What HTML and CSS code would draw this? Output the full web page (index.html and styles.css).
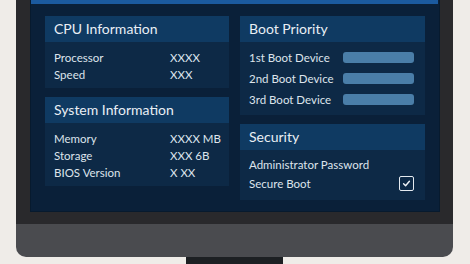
FILE: index.html
```html
<!DOCTYPE html>
<html>
<head>
<meta charset="utf-8">
<link rel="stylesheet" href="styles.css">
</head>
<body>
<div class="scene">
  <div class="monitor">
    <div class="bezel">
      <div class="screen">
        <div class="titlebar"></div>
        <div class="grid">
          <div class="col">
            <section class="panel">
              <h2 class="panel-head">CPU Information</h2>
              <div class="panel-body info">
                <div class="row"><span class="label">Processor</span><span class="value">XXXX</span></div>
                <div class="row"><span class="label">Speed</span><span class="value">XXX</span></div>
              </div>
            </section>
            <section class="panel">
              <h2 class="panel-head">System Information</h2>
              <div class="panel-body info">
                <div class="row"><span class="label">Memory</span><span class="value">XXXX MB</span></div>
                <div class="row"><span class="label">Storage</span><span class="value">XXX 6B</span></div>
                <div class="row"><span class="label">BIOS Version</span><span class="value">X XX</span></div>
              </div>
            </section>
          </div>
          <div class="col">
            <section class="panel">
              <h2 class="panel-head">Boot Priority</h2>
              <div class="panel-body boot">
                <div class="row"><span class="label">1st Boot Device</span><span class="bar"></span></div>
                <div class="row"><span class="label">2nd Boot Device</span><span class="bar"></span></div>
                <div class="row"><span class="label">3rd Boot Device</span><span class="bar"></span></div>
              </div>
            </section>
            <section class="panel">
              <h2 class="panel-head">Security</h2>
              <div class="panel-body security">
                <div class="row"><span class="label">Administrator Password</span></div>
                <div class="row"><span class="label">Secure Boot</span>
                  <span class="checkbox"><svg viewBox="0 0 15 15" width="15" height="15"><path d="M4.6 7.8 L6.6 9.8 L10.4 5.2" fill="none" stroke="#eef2f6" stroke-width="1.4" stroke-linecap="round" stroke-linejoin="round"/></svg></span>
                </div>
              </div>
            </section>
          </div>
        </div>
      </div>
    </div>
    <div class="chin"></div>
  </div>
  <div class="stand"></div>
</div>
</body>
</html>
```

FILE: styles.css
```css
* { box-sizing: border-box; }
html, body { margin: 0; padding: 0; }
body {
  background: #efece8;
  font-family: Lato, "Open Sans", sans-serif;
  color: #dde4ec;
  width: 470px;
  height: 264px;
  overflow: hidden;
}
.scene { display: flex; flex-direction: column; }
.monitor { margin-left: 16px; width: 437px; }
.bezel {
  background: #29292c;
  padding: 0 13px 12px 14px;
}
.screen {
  height: 212px;
  background: #0a2039;
  border: 1px solid #071a2e;
  border-top: 0;
}
.titlebar {
  height: 4px;
  background: #1b5a9f;
  margin: 0 1px 0 0;
}
.grid {
  display: grid;
  grid-template-columns: 184px 185px;
  column-gap: 11px;
  padding: 12px 0 0 14px;
}
.col { display: flex; flex-direction: column; gap: 9px; }
.panel { background: #0d2946; }
.panel-head {
  margin: 0;
  height: 26px;
  line-height: 26px;
  padding-left: 9px;
  background: #0f3a62;
  font-size: 14px;
  font-weight: 400;
  color: #e9eff5;
  white-space: nowrap;
}
.panel-body { padding: 7px 11px 5px 9px; font-size: 11.5px; white-space: nowrap; }
.row { display: flex; align-items: center; }
.info .row { height: 17px; }
.info .label { flex: none; width: 116px; }
.boot { padding-top: 5px; padding-bottom: 5px; }
.boot .row { height: 21px; justify-content: space-between; }
.bar {
  width: 71px;
  height: 11px;
  border-radius: 3px;
  background: #4a7ea8;
}
.security { padding-top: 5px; padding-bottom: 7px; }
.security .row { height: 19px; justify-content: space-between; }
.checkbox {
  width: 15px;
  height: 15px;
  border: 1.5px solid #e4eaf0;
  border-radius: 2px;
  display: flex;
  align-items: center;
  justify-content: center;
}
.checkbox svg { flex: none; }
.chin {
  height: 33px;
  background: #4a4b4f;
  border-radius: 0 0 10px 10px;
}
.stand {
  margin-left: 186px;
  width: 97px;
  height: 7px;
  background: #1d2023;
}
```
